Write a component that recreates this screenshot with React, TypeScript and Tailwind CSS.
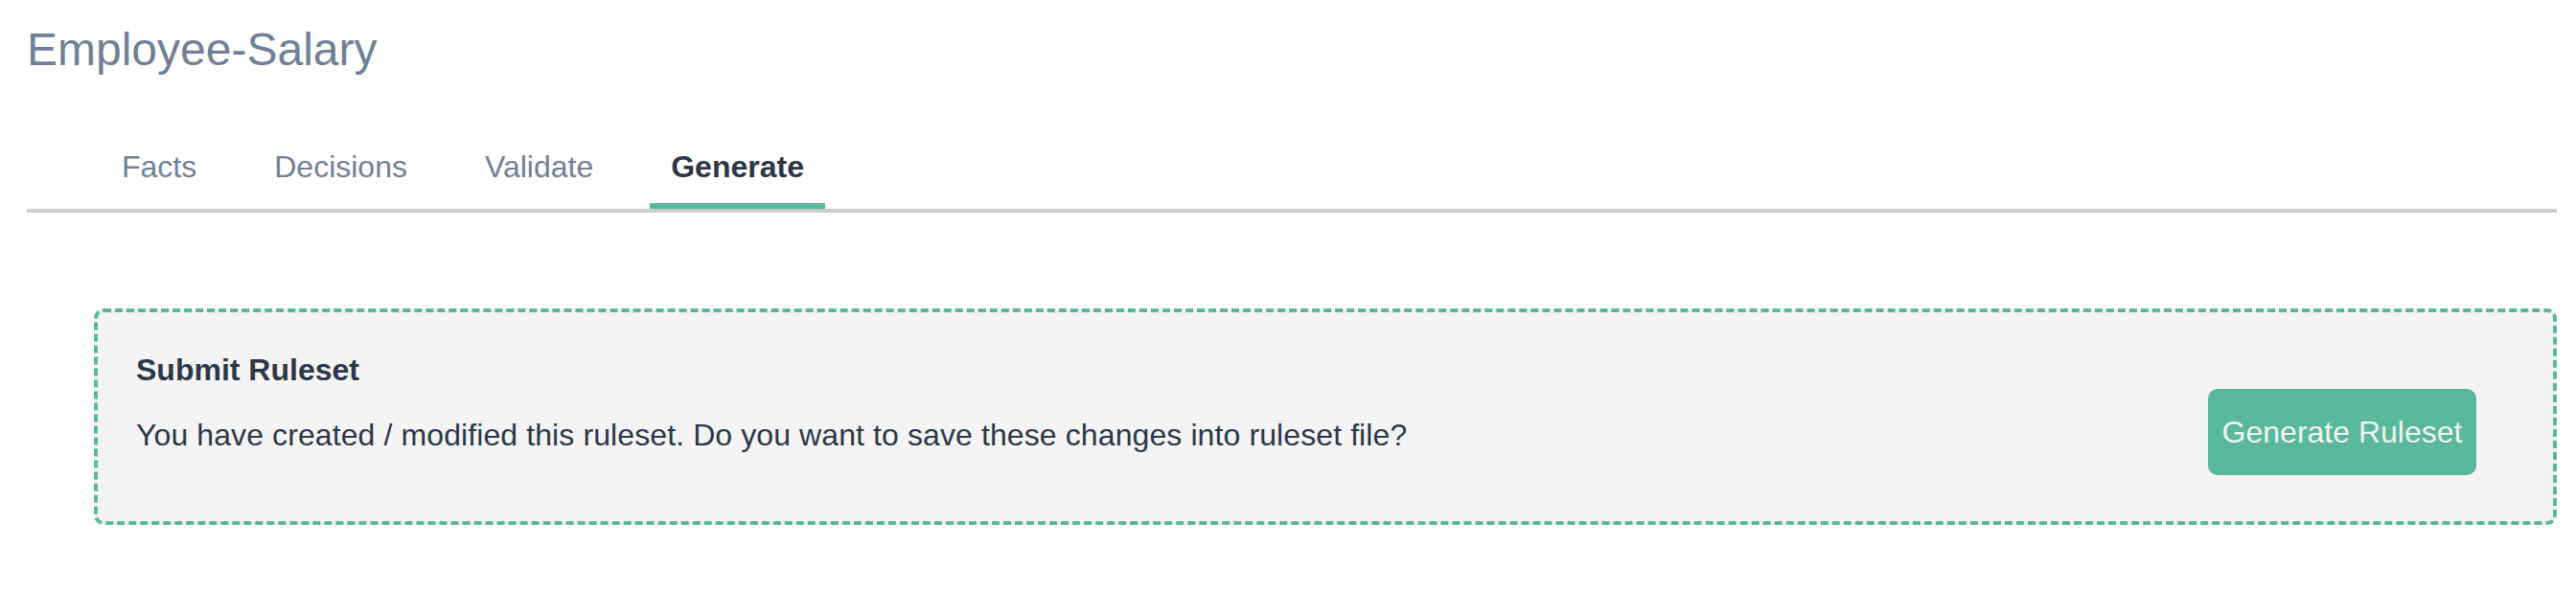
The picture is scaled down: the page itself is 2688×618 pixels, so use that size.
import React, { useState } from "react";

const tabs = ["Facts", "Decisions", "Validate", "Generate"];

const App = () => {
  const [activeTab, setActiveTab] = useState("Generate");

  return (
    <div className="min-h-[618px] bg-white pl-[28px] pr-[20px] pt-[24px] font-['Liberation_Sans',Arial,sans-serif]">
      {/* Ruleset title */}
      <h1 className="text-[48px] leading-[56px] text-[#718096]">Employee-Salary</h1>

      {/* Tabs */}
      <div className="mt-[70px] flex gap-[37px] border-b-4 border-[#cccccc] pl-[77px]">
        {tabs.map((tab) => (
          <button
            key={tab}
            onClick={() => setActiveTab(tab)}
            className={`border-b-[6px] px-[22px] pb-[14px] text-[32px] leading-[48px] ${
              activeTab === tab
                ? "border-[#59b89b] font-bold text-[#2d3748]"
                : "border-transparent text-[#718096]"
            }`}
          >
            {tab}
          </button>
        ))}
      </div>

      {/* Submit panel */}
      <div className="ml-[70px] mt-[100px] flex items-start justify-between rounded-[10px] border-4 border-dashed border-[#59b89b] bg-[#f4f4f4] pb-[48px] pl-[40px] pr-[80px] pt-[36px]">
        <div>
          <h2 className="text-[32px] font-bold leading-[48px] text-[#2d3748]">Submit Ruleset</h2>
          <p className="mt-[20px] text-[32px] leading-[48px] tracking-[0.1px] text-[#2d3748]">
            You have created / modified this ruleset. Do you want to save these changes into ruleset file?
          </p>
        </div>
        <button className="mt-[44px] flex h-[90px] w-[280px] items-center justify-center rounded-[10px] bg-[#59b89b] text-[32px] text-[#eef5f2]">
          Generate Ruleset
        </button>
      </div>
    </div>
  );
};

export default App;
